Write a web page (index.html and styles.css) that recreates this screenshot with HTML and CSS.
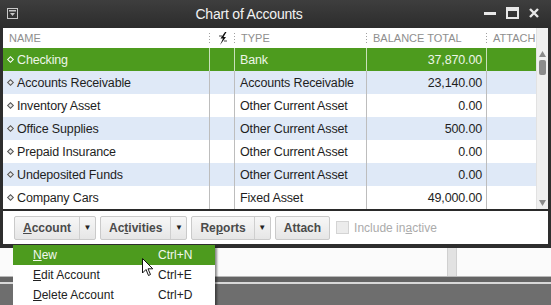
FILE: index.html
```html
<!DOCTYPE html>
<html>
<head>
<meta charset="utf-8">
<title>Chart of Accounts</title>
<link rel="stylesheet" href="styles.css">
</head>
<body>

<div class="window">
	<div class="titlebar">
		<span class="sysicon"><svg width="11" height="11" viewBox="0 0 11 11"><rect x="0.5" y="0.5" width="10" height="10" fill="none" stroke="#c8c8c8"/><rect x="2" y="2" width="7" height="1.5" fill="#c8c8c8"/><path d="M3 5 L8 5 L5.5 8 Z" fill="#c8c8c8"/></svg></span>
		<span class="title">Chart of Accounts</span>
		<span class="controls">
			<svg width="12" height="12" viewBox="0 0 12 12"><rect x="0" y="5" width="12" height="3" fill="#e8e8e8"/></svg>
			<svg width="13" height="12" viewBox="0 0 13 12"><rect x="1" y="1" width="11" height="10" fill="none" stroke="#e8e8e8" stroke-width="2"/><rect x="1" y="1" width="11" height="3" fill="#e8e8e8"/></svg>
			<svg width="10" height="10" viewBox="0 0 10 10"><path d="M1 1 L9 9 M9 1 L1 9" stroke="#e8e8e8" stroke-width="2.4"/></svg>
		</span>
	</div>

	<div class="pane">
		<div class="list">
			<div class="grid">
				<div class="row head">
					<div class="c">NAME</div>
					<div class="c bolt"><svg width="8" height="13" viewBox="0 0 8 13"><path d="M6 0 L1.5 6.5 L4 6.5 L1 13 L7 5 L4.5 5 L7.5 0 Z" fill="#111"/><path d="M0 4 L3 4 M5 9 L8 9" stroke="#111" stroke-width="0.8"/></svg></div>
					<div class="c">TYPE</div>
					<div class="c">BALANCE TOTAL</div>
					<div class="c">ATTACH</div>
				</div>
				<div class="row sel">
					<div class="c"><i class="dot"></i>Checking</div><div class="c"></div><div class="c">Bank</div><div class="c num">37,870.00</div><div class="c"></div>
				</div>
				<div class="row alt">
					<div class="c"><i class="dot"></i>Accounts Receivable</div><div class="c"></div><div class="c">Accounts Receivable</div><div class="c num">23,140.00</div><div class="c"></div>
				</div>
				<div class="row">
					<div class="c"><i class="dot"></i>Inventory Asset</div><div class="c"></div><div class="c">Other Current Asset</div><div class="c num">0.00</div><div class="c"></div>
				</div>
				<div class="row alt">
					<div class="c"><i class="dot"></i>Office Supplies</div><div class="c"></div><div class="c">Other Current Asset</div><div class="c num">500.00</div><div class="c"></div>
				</div>
				<div class="row">
					<div class="c"><i class="dot"></i>Prepaid Insurance</div><div class="c"></div><div class="c">Other Current Asset</div><div class="c num">0.00</div><div class="c"></div>
				</div>
				<div class="row alt">
					<div class="c"><i class="dot"></i>Undeposited Funds</div><div class="c"></div><div class="c">Other Current Asset</div><div class="c num">0.00</div><div class="c"></div>
				</div>
				<div class="row">
					<div class="c"><i class="dot"></i>Company Cars</div><div class="c"></div><div class="c">Fixed Asset</div><div class="c num">49,000.00</div><div class="c"></div>
				</div>
			</div>
			<div class="scroll">
				<svg width="11" height="161" viewBox="0 0 11 161">
					<path d="M2 9 L5.5 3 L9 9 Z" fill="#8a8a8a"/>
					<rect x="2" y="12" width="7" height="15" rx="2" fill="#8c8c8c"/>
					<path d="M2 152 L5.5 158 L9 152 Z" fill="#8a8a8a"/>
				</svg>
			</div>
		</div>

		<div class="toolbar">
			<div class="btn split"><span class="main"><span><u>A</u>ccount</span></span><span class="dd">&#9660;</span></div>
			<div class="btn split"><span class="main"><span>Ac<u>t</u>ivities</span></span><span class="dd">&#9660;</span></div>
			<div class="btn split"><span class="main"><span>Re<u>p</u>orts</span></span><span class="dd">&#9660;</span></div>
			<div class="btn"><span class="main">Attach</span></div>
			<div class="check"><span class="box"></span><span>Include in<u>a</u>ctive</span></div>
		</div>
	</div>
</div>

<div class="desk">
	<div class="desk-top">
		<div class="fill"></div>
		<div class="strip"></div>
		<div class="fill"></div>
	</div>
	<div class="band"></div>
</div>

<div class="menu">
	<div class="item on"><span><u>N</u>ew</span><span>Ctrl+N</span></div>
	<div class="item"><span><u>E</u>dit Account</span><span>Ctrl+E</span></div>
	<div class="item"><span><u>D</u>elete Account</span><span>Ctrl+D</span></div>
</div>

<svg class="cursor" width="12" height="19" viewBox="0 0 12 19"><path d="M0.5 0.5 L0.5 15 L4 11.5 L6.5 17.5 L8.5 16.5 L6 10.8 L10.8 10.8 Z" fill="#fff" stroke="#111" stroke-width="1"/></svg>

</body>
</html>
```

FILE: styles.css
```css
body{
	margin: 0;
	width: 551px;
	height: 305px;
	overflow: hidden;
	position: relative;
	font-family: "Liberation Sans", Arial, sans-serif;
	background: #6e6e6e;
}

.window{
	background: #2e2e2e;
	padding: 0 3px 4px 3px;
}

.titlebar{
	height: 28px;
	display: flex;
	align-items: center;
	margin: 0 -3px;
	padding: 0 12px 0 7px;
	background: linear-gradient(#3e3e3e, #2c2c2c);
	color: #f2f2f2;
}

.sysicon{
	display: flex;
	width: 11px;
	margin-top: -2px;
}

.title{
	flex: 1;
	text-align: center;
	font-size: 14px;
	letter-spacing: -0.2px;
	padding-right: 4px;
}

.controls{
	display: flex;
	align-items: center;
	gap: 10px;
	margin-top: -2px;
}

.pane{
	background: #fff;
}

.list{
	display: flex;
	border-bottom: 2px solid #2a2a2a;
}

.grid{
	flex: 1;
}

.row{
	display: grid;
	grid-template-columns: 207px 25px 132px 120px 1fr;
	height: 23px;
	font-size: 12.5px;
	color: #1e1e1e;
	letter-spacing: -0.15px;
}

.row .c{
	display: flex;
	align-items: center;
	padding-left: 5px;
	border-right: 1px solid #bdbdbd;
	white-space: nowrap;
	overflow: hidden;
}

.row .c:last-child{
	border-right: none;
}

.row .num{
	justify-content: flex-end;
	padding: 0 4px 0 0;
}

.row.alt{
	background: #dfe9f7;
}

.row.sel{
	background: #4d9b1e;
	color: #eef6e8;
}

.row.sel .c{
	border-right-color: #c9e0bb;
}

.row.head{
	height: 20px;
	font-size: 11px;
	color: #8e8e8e;
	letter-spacing: 0;
}

.row.head .c{
	border-right: none;
	padding-left: 6px;
	background-image: repeating-linear-gradient(#a0a0a0 0 1px, transparent 1px 3px);
	background-size: 1px 11px;
	background-position: right center;
	background-repeat: no-repeat;
}

.row.head .c:last-child{
	background: none;
}

.row.head .bolt{
	padding-left: 9px;
}

.dot{
	display: inline-block;
	width: 3px;
	height: 3px;
	border: 1px solid #555;
	background: #e8e8e8;
	transform: rotate(45deg);
	margin: 0 4px 0 0;
}

.row.sel .dot{
	border-color: #fff;
	background: #4d9b1e;
}

.scroll{
	width: 11px;
	background: #f0f0f0;
	padding-top: 20px;
	border-left: 1px solid #e2e2e2;
}

.scroll svg{
	display: block;
}

.toolbar{
	height: 33px;
	display: flex;
	align-items: center;
	padding: 0 0 0 11px;
	gap: 4px;
}

.btn{
	display: flex;
	height: 22px;
	border: 1px solid #cacaca;
	border-radius: 2px;
	background: linear-gradient(#f7f7f7, #e6e6e6);
	font-size: 12px;
	font-weight: bold;
	color: #4a4a4a;
}

.btn .main{
	display: flex;
	align-items: center;
	padding: 0 8px;
}

.btn.split .main{
	border-right: 1px solid #cfcfcf;
}

.btn .dd{
	display: flex;
	align-items: center;
	justify-content: center;
	width: 15px;
	font-size: 8px;
	color: #222;
}

.check{
	display: flex;
	align-items: center;
	gap: 5px;
	margin-left: 2px;
	font-size: 12px;
	color: #ababab;
}

.check .box{
	width: 11px;
	height: 11px;
	border: 1px solid #d4d4d4;
	background: #ececec;
}

.desk{
	height: 57px;
	display: flex;
	flex-direction: column;
}

.desk-top{
	height: 28px;
	display: flex;
	background: #fbfbfb;
	border-bottom: 1px solid #b8b8b8;
}

.desk-top .fill:first-child{
	width: 447px;
}

.desk-top .fill:last-child{
	flex: 1;
}

.strip{
	width: 8px;
	background: #e2e2e2;
	border-left: 1px solid #d0d0d0;
	border-right: 1px solid #d0d0d0;
}

.band{
	height: 5px;
	background: #646464;
	border-bottom: 2px solid #d8d8d8;
}

.menu{
	position: absolute;
	left: 13px;
	top: 245px;
	width: 202px;
	background: #fff;
	box-shadow: 2px 2px 2px rgba(0,0,0,0.45);
	font-size: 12px;
	color: #222;
}

.item{
	display: grid;
	grid-template-columns: 125px 1fr;
	height: 20px;
	align-items: center;
	padding-left: 20px;
}

.item.on{
	background: #4d9b1e;
	color: #f2f8ee;
}

.cursor{
	position: absolute;
	left: 142px;
	top: 258px;
}
```
